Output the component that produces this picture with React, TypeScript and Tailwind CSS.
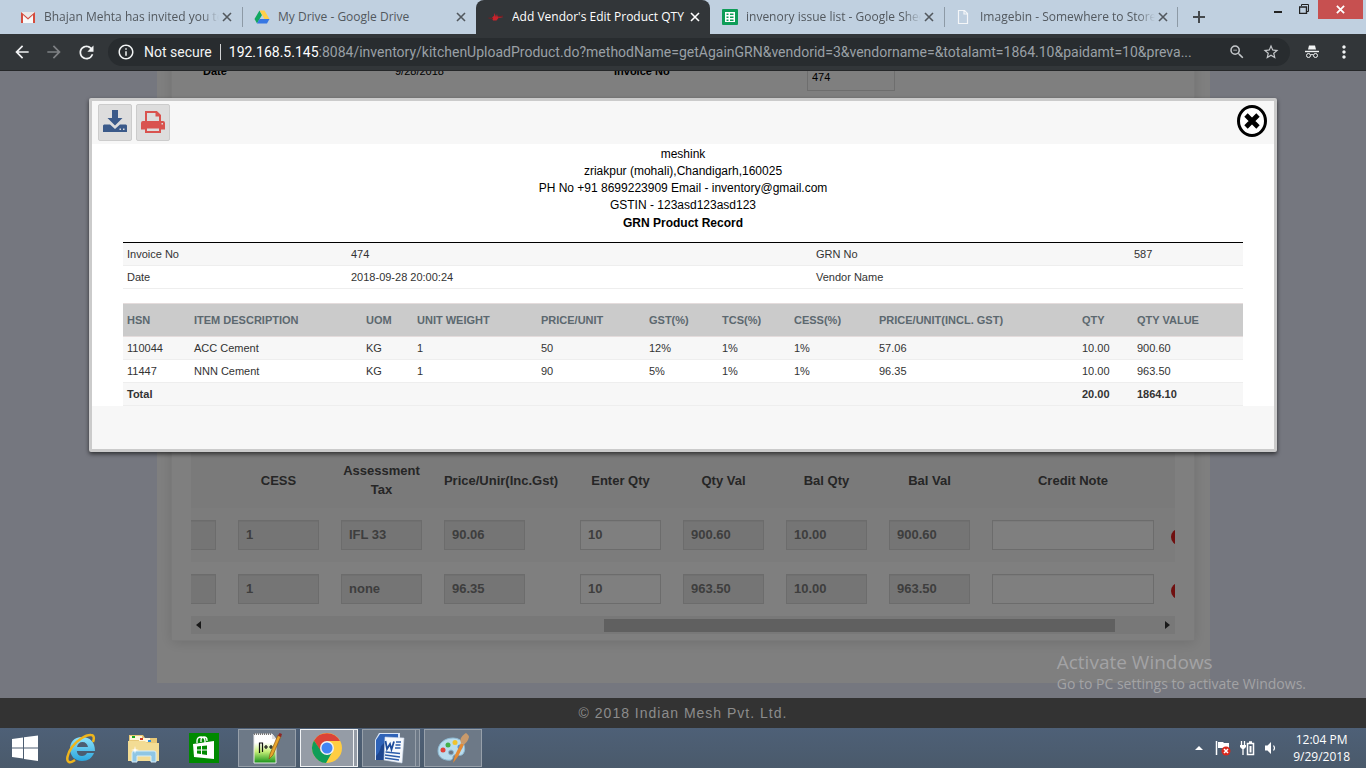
import type { ReactNode } from 'react'
import {
  MdArrowBack,
  MdArrowForward,
  MdInfoOutline,
  MdMoreVert,
  MdRefresh,
  MdStarBorder,
  MdZoomOut,
} from 'react-icons/md'

const GmailIcon = () => (
  <svg viewBox="0 0 16 16" className="size-4">
    <path d="M1 3h14v11H1z" fill="#e9e9e9" />
    <path d="M3 14V7l5 4 5-4v7z" fill="#f8f8f8" />
    <path d="M1 14V3l7 6 7-6v11h-2V6L8 10.500 3 6v8z" fill="#d54b3d" />
  </svg>
)

const DriveIcon = () => (
  <svg viewBox="0 0 16 16" className="size-4">
    <path d="M5.500 1.500 0.500 10l2.500 4.500L8 6z" fill="#11a861" />
    <path d="M5.500 1.500h5L15.500 10h-5z" fill="#ffcf48" />
    <path d="M5.500 10h10L13 14.500H3z" fill="#3777e3" />
  </svg>
)

const VendorIcon = () => (
  <svg viewBox="0 0 16 16" className="size-4">
    <path d="M5 7.500 6 7l.500-3L8 8l1-3 .500 2.500 6 .500-5 1-2 2.500H5L4 9z" fill="#c8232c" />
    <path d="M0.500 9 5 9.500M10 8l5-1" stroke="#7a1d22" />
  </svg>
)

const SheetsIcon = () => (
  <svg viewBox="0 0 16 16" className="size-4">
    <rect width="16" height="16" rx="1" fill="#0f9d58" />
    <path d="M3 3h10v10H3z" fill="#fff" />
    <path d="M4.500 4.500h2v1.500h-2zM8 4.500h3.500V6H8zM4.500 7.500h2V9h-2zM8 7.500h3.500V9H8zM4.500 10.500h2V12h-2zM8 10.500h3.500V12H8z" fill="#0f9d58" />
  </svg>
)

const PageIcon = () => (
  <svg viewBox="0 0 16 16" className="size-4">
    <path d="M2.500 1.500h6l3 3v10h-9z M8 1.500V5h3.500" fill="none" stroke="#f4f6f8" strokeWidth="1.200" />
  </svg>
)

const tabs = [
  { title: 'Bhajan Mehta has invited you to', icon: <GmailIcon />, long: true },
  { title: 'My Drive - Google Drive', icon: <DriveIcon />, divider: 'left' },
  { title: "Add Vendor's Edit Product QTY", icon: <VendorIcon />, active: true },
  { title: 'invenory issue list - Google Shee', icon: <SheetsIcon />, long: true },
  { title: 'Imagebin - Somewhere to Store', icon: <PageIcon />, divider: 'both', long: true },
]

const TabStrip = () => (
  <div className="flex h-[34px] shrink-0 bg-[#c0d0e0] pl-2 text-[12px] text-[#52585e]">
    {tabs.map((tab) => (
      <div
        key={tab.title}
        className={`flex w-[234px] min-w-0 items-center pr-[10px] pl-3 ${
          tab.active ? 'rounded-t-lg bg-[#323639] text-white' : ''
        } ${tab.divider ? 'relative' : ''}`}
      >
        {tab.divider && <span className="absolute top-[7px] left-0 h-5 w-px bg-[#8d9aa6]" />}
        {tab.divider === 'both' && <span className="absolute top-[7px] right-0 h-5 w-px bg-[#8d9aa6]" />}
        <span className="shrink-0">{tab.icon}</span>
        <span
          className={`ml-2 min-w-0 flex-1 overflow-hidden whitespace-nowrap ${tab.long ? 'mask-r-from-90%' : ''}`}
        >
          {tab.title}
        </span>
        <button type="button" aria-label={`Close ${tab.title}`} className="ml-[3px] shrink-0">
          <svg viewBox="0 0 10 10" className="size-[10px]">
            <path d="M1 1l8 8M9 1L1 9" stroke="currentColor" strokeWidth="1.600" />
          </svg>
        </button>
      </div>
    ))}
    <button type="button" aria-label="New tab" className="ml-[15px] text-[#45494d]">
      <svg viewBox="0 0 12 12" className="size-3">
        <path d="M6 0v12M0 6h12" stroke="currentColor" strokeWidth="2" />
      </svg>
    </button>
    <div className="ml-auto flex items-start text-[#222]">
      <button type="button" aria-label="Minimize" className="flex h-[20px] w-[26px] items-center justify-center">
        <svg viewBox="0 0 10 10" className="size-[10px]">
          <path d="M1 6h8v2H1z" fill="currentColor" />
        </svg>
      </button>
      <button type="button" aria-label="Restore" className="flex h-[18px] w-[26px] items-center justify-center">
        <svg viewBox="0 0 10 10" className="size-[10px]" fill="none" stroke="currentColor">
          <path d="M2.500 2V.500h7v7H8" />
          <path d="M.500 3h7v6.500h-7z" strokeWidth="1.400" />
        </svg>
      </button>
      <button
        type="button"
        aria-label="Close window"
        className="mr-[3px] ml-px flex h-[19px] w-[45px] items-center justify-center bg-[#c75050]"
      >
        <svg viewBox="0 0 10 10" className="size-[9px]">
          <path d="M1 1l8 8M9 1L1 9" stroke="#fff" strokeWidth="2" />
        </svg>
      </button>
    </div>
  </div>
)

const AddressBar = () => (
  <div className="flex h-[37px] shrink-0 items-center border-b border-[#252729] bg-[#323639] text-[#f1f3f4]">
    <button type="button" aria-label="Back" className="ml-3">
      <MdArrowBack className="size-5" />
    </button>
    <button type="button" aria-label="Forward" className="ml-3 text-[#7e8184]">
      <MdArrowForward className="size-5" />
    </button>
    <button type="button" aria-label="Reload" className="ml-3">
      <MdRefresh className="size-[21px]" />
    </button>
    <div className="ml-[11px] flex h-7 min-w-0 flex-1 items-center rounded-full bg-[#282c2f] pr-[10px] pl-[9px] font-[Roboto,sans-serif] text-[14px]">
      <MdInfoOutline className="size-[18px] shrink-0" />
      <span className="ml-[9px] shrink-0">Not secure</span>
      <span className="mx-2 h-4 w-px shrink-0 bg-[#d0d2d4]" />
      <span className="min-w-0 flex-1 overflow-hidden whitespace-nowrap text-[#9aa0a6]">
        <span className="text-white">192.168.5.145</span>
        :8084/inventory/kitchenUploadProduct.do?methodName=getAgainGRN&amp;vendorid=3&amp;vendorname=&amp;totalamt=1864.10&amp;paidamt=10&amp;preva...
      </span>
      <button type="button" aria-label="Zoom" className="ml-3 text-[#c5c8cb]">
        <MdZoomOut className="size-[18px]" />
      </button>
      <button type="button" aria-label="Bookmark" className="ml-4 text-[#c5c8cb]">
        <MdStarBorder className="size-[18px]" />
      </button>
    </div>
    <svg viewBox="0 0 16 16" className="ml-[14px] size-4" fill="none" stroke="currentColor">
      <path d="M5 1.500h6l1 4H4z" fill="currentColor" stroke="none" />
      <path d="M1 7.500h14" strokeWidth="1.400" />
      <circle cx="4.500" cy="11.500" r="2" />
      <circle cx="11.500" cy="11.500" r="2" />
      <path d="M6.500 11q1.500-1 3 0" />
    </svg>
    <button type="button" aria-label="Menu" className="mr-3 ml-[14px]">
      <MdMoreVert className="size-5" />
    </button>
  </div>
)

const stockColumns = [
  { label: '', width: 'w-[36px]' },
  { label: 'CESS', width: 'w-[103px]' },
  { label: 'Assessment Tax', width: 'w-[103px]' },
  { label: 'Price/Unir(Inc.Gst)', width: 'w-[136px]' },
  { label: 'Enter Qty', width: 'w-[103px]', editable: true },
  { label: 'Qty Val', width: 'w-[103px]' },
  { label: 'Bal Qty', width: 'w-[103px]' },
  { label: 'Bal Val', width: 'w-[103px]' },
  { label: 'Credit Note', width: 'w-[184px]', editable: true, wide: true },
]

const stockRows = [
  ['', '1', 'IFL 33', '90.06', '10', '900.60', '10.00', '900.60', ''],
  ['', '1', 'none', '96.35', '10', '963.50', '10.00', '963.50', ''],
]

const StockTable = () => (
  <table className="w-full table-fixed text-[13px] font-bold">
    <thead>
      <tr className="h-[58px] bg-[#f4f4f4] text-[#4c4c4c]">
        {stockColumns.map((col) => (
          <th key={col.label} className={`${col.width} px-[10px] pt-[2px] pb-0 text-center leading-[19px]`}>
            {col.label}
          </th>
        ))}
        <th className="w-[10px] p-0" />
      </tr>
    </thead>
    <tbody>
      {stockRows.map((row, i) => (
        <tr key={i} className="h-[54px] odd:bg-[#f8f8f8]">
          {row.map((value, j) => {
            const col = stockColumns[j]
            return (
              <td key={j} className="overflow-hidden p-0">
                <div className={j === 0 ? 'flex justify-end pr-[11px]' : 'px-[11px]'}>
                  <input
                    aria-label={col.label || 'TCS'}
                    defaultValue={value}
                    readOnly={!col.editable}
                    className={`block h-[30px] shrink-0 border border-[#d8d8d8] px-[7px] pb-px text-[#7c7c7c] inset-shadow-xs ${
                      col.wide ? 'w-full' : 'w-[81px]'
                    } ${col.editable ? 'bg-white' : 'bg-[#ebebeb]'}`}
                  />
                </div>
              </td>
            )
          })}
          <td className="overflow-hidden p-0">
            <button type="button" aria-label="Remove row" className="mt-1 ml-[6px] block size-4 rounded-full bg-[#e02020]" />
          </td>
        </tr>
      ))}
    </tbody>
  </table>
)

const StockPage = () => (
  <div className="mr-[156px] mb-[15px] ml-[157px] bg-white pr-[15px] pb-[42px] pl-[14px]">
    <div className="border border-[#f4f4f4] px-[19px] pb-[6px] shadow-[0_2px_12px_rgba(0,0,0,0.12)]">
      <div className="flex h-[396px] items-start pl-3 text-[11px] text-black">
        <span className="w-[192px] pt-[9px] font-bold">Date</span>
        <span className="w-[219px] pt-[9px]">9/28/2018</span>
        <label htmlFor="invoice" className="w-[193px] pt-[9px] font-bold">
          Invoice No
        </label>
        <input
          id="invoice"
          defaultValue="474"
          className="mt-[9px] h-[28px] w-[88px] border border-[#dcdcdc] px-1"
        />
      </div>
      <StockTable />
      <div className="flex h-[18px] items-center bg-[#f1f1f1] px-[5px] text-[#333]">
        <svg viewBox="0 0 5 8" className="h-2 w-[5px]">
          <path d="M5 0v8L0 4z" fill="currentColor" />
        </svg>
        <span className="mr-[50px] ml-[403px] h-[13px] flex-1 bg-[#c1c1c1]" />
        <svg viewBox="0 0 5 8" className="h-2 w-[5px]">
          <path d="M0 0v8l5-4z" fill="currentColor" />
        </svg>
      </div>
    </div>
  </div>
)

const productColumns = [
  { label: 'HSN', width: 'w-[67px]' },
  { label: 'ITEM DESCRIPTION', width: 'w-[172px]' },
  { label: 'UOM', width: 'w-[51px]' },
  { label: 'UNIT WEIGHT', width: 'w-[124px]' },
  { label: 'PRICE/UNIT', width: 'w-[108px]' },
  { label: 'GST(%)', width: 'w-[73px]' },
  { label: 'TCS(%)', width: 'w-[72px]' },
  { label: 'CESS(%)', width: 'w-[85px]' },
  { label: 'PRICE/UNIT(INCL. GST)', width: 'w-[203px]' },
  { label: 'QTY', width: 'w-[55px]' },
  { label: 'QTY VALUE', width: 'w-[110px]' },
]

const products = [
  ['110044', 'ACC Cement', 'KG', '1', '50', '12%', '1%', '1%', '57.06', '10.00', '900.60'],
  ['11447', 'NNN Cement', 'KG', '1', '90', '5%', '1%', '1%', '96.35', '10.00', '963.50'],
]

const GrnDialog = () => (
  <div
    role="dialog"
    aria-label="GRN Product Record"
    className="w-full rounded-xs border-3 border-[#cbcbcb] bg-[#f7f7f7] pb-[43px] shadow-[0_2px_4px_rgba(0,0,0,0.6)]"
  >
    <div className="flex h-[43px] items-start gap-1 px-[6px] pt-[3px]">
      <button
        type="button"
        aria-label="Download"
        className="flex h-[37px] w-[34px] items-center justify-center rounded-xs border border-[#ccc] bg-[#ddd]"
      >
        <svg viewBox="0 0 24 24" className="mb-[3px] size-6">
          <path d="M9 1h6v8h4.500L12 16.500 4.500 9H9z" fill="#3b5a8a" />
          <path d="M1 15.500h6l5 4.500 5-4.500h6l1 1V23H0v-6.500z" fill="#3b5a8a" />
          <path d="M16.500 19.500H18V21h-1.500zM20 19.500h1.500V21H20z" fill="#ddd" />
        </svg>
      </button>
      <button
        type="button"
        aria-label="Print"
        className="flex h-[37px] w-[34px] items-center justify-center rounded-xs border border-[#ccc] bg-[#ddd]"
      >
        <svg viewBox="0 0 24 24" className="mb-px size-6">
          <path d="M5 12V2h10.500L19 5.500V12" fill="#ddd" stroke="#d9534f" strokeWidth="2" />
          <path d="M14.500 1.500V6.500H20z" fill="#d9534f" />
          <path d="M2 11h20q2 0 2 2v6.500h-4V17H4v2.500H0V13q0-2 2-2z" fill="#d9534f" />
          <path d="M5 17.500h14V22H5z" fill="#ddd" stroke="#d9534f" strokeWidth="2" />
          <path d="M20.500 13H22v1.500h-1.500z" fill="#ddd" />
        </svg>
      </button>
      <button type="button" aria-label="Close" className="ml-auto">
        <svg viewBox="0 0 32 34" className="h-[34px] w-8" fill="none" stroke="#000">
          <ellipse cx="16" cy="17" rx="13.500" ry="14.500" strokeWidth="3" fill="#fff" />
          <path d="M10 11l12 12M22 11L10 23" strokeWidth="4.800" />
        </svg>
      </button>
    </div>

    <div className="bg-white px-[31px]">
      <div className="pt-[2px] text-center text-[12px] leading-[17px] text-black">
        <p>meshink</p>
        <p>zriakpur (mohali),Chandigarh,160025</p>
        <p>PH No +91 8699223909 Email - inventory@gmail.com</p>
        <p>GSTIN - 123asd123asd123</p>
        <h2 className="pb-[10px] leading-[18px] font-bold">GRN Product Record</h2>
      </div>
      <table className="w-full table-fixed border-t border-black text-left text-[11px] text-[#333]">
        <tbody>
          <tr className="h-[23px] border-b border-[#eee] bg-[#f7f7f7]">
            <td className="w-[224px] px-1 py-0">Invoice No</td>
            <td className="w-[465px] px-1 py-0">474</td>
            <td className="w-[318px] px-1 py-0">GRN No</td>
            <td className="w-[113px] px-1 py-0">587</td>
          </tr>
          <tr className="h-[23px] border-b border-[#eee]">
            <td className="px-1 py-0">Date</td>
            <td className="px-1 py-0">2018-09-28 20:00:24</td>
            <td className="px-1 py-0">Vendor Name</td>
            <td />
          </tr>
        </tbody>
      </table>
      <table className="mt-[14px] w-full table-fixed text-left text-[11px] text-[#333]">
        <thead>
          <tr className="h-[33px] border-y border-[#e4dcdc] bg-[#cbcbcb] text-[#5c686f]">
            {productColumns.map((col) => (
              <th key={col.label} className={`${col.width} px-1 py-0 whitespace-nowrap`}>
                {col.label}
              </th>
            ))}
          </tr>
        </thead>
        <tbody>
          {products.map((row) => (
            <tr key={row[0]} className="h-[23px] border-b border-[#eee] odd:bg-[#f7f7f7]">
              {row.map((value, i) => (
                <td key={i} className="px-1 py-0">
                  {value}
                </td>
              ))}
            </tr>
          ))}
          <tr className="h-[23px] border-b border-[#eee] bg-[#f7f7f7] font-bold">
            <td colSpan={9} className="px-1 py-0">
              Total
            </td>
            <td className="px-1 py-0">20.00</td>
            <td className="px-1 py-0">1864.10</td>
          </tr>
        </tbody>
      </table>
    </div>
  </div>
)

const StartIcon = () => (
  <svg viewBox="0 0 26 26" className="size-[26px]" fill="#fff">
    <path d="M0 4l11-1.500V12.500H0zM12 2.300 26 .500v12H12zM0 13.500h11v10L0 22zM12 13.500h14V26l-14-2z" />
  </svg>
)

const FilesIcon = () => (
  <svg viewBox="0 0 32 32" className="size-8">
    <path d="M2 3h14l2 3h12v22H2z" fill="#e8c877" />
    <path d="M3 4h12v4H3zM12 6h11v4H12z" fill="#fff7dd" />
    <path d="M5 4h3v2H5z" fill="#1ba81b" />
    <path d="M13 6h3v2h-3z" fill="#d03a20" />
    <path d="M21 8h3v2h-3z" fill="#2a8fe0" />
    <path d="M1 9h17l2 2h12v18H1z" fill="#f3dc94" />
    <path d="M5 30V21q0-2 2-2h20q2 0 2 2v9h-5v-6H10v6z" fill="#8fc6e4" stroke="#d6eef8" />
    <path d="M8 14l.700 3.300L12 18l-3.300.700L8 22l-.700-3.300L4 18l3.300-.700z" fill="#fff" />
  </svg>
)

const BrowserIcon = () => (
  <svg viewBox="0 0 32 32" className="size-8">
    <defs>
      <linearGradient id="ie" x2="0" y2="1">
        <stop stopColor="#8fe3fb" />
        <stop offset="1" stopColor="#2aa6de" />
      </linearGradient>
    </defs>
    <path
      d="M17 5C9 5 5 10 5 17s5 12 12 12c6 0 10-3 12-8h-7c-1 2-2.500 3-5 3-3 0-5-2-5.200-5H30C30 10 25 5 17 5zm-5 10c.500-3 2.500-5 5.500-5s5 2 5.500 5z"
      fill="url(#ie)"
    />
    <path
      d="M28 10c1.500-4 1-7-2-7C21 2.500 12 8 7 15 2 22 1 29 4 30c1.500.500 4-.500 6-2"
      fill="none"
      stroke="#efb51c"
      strokeWidth="2.500"
    />
  </svg>
)

const StoreIcon = () => (
  <svg viewBox="0 0 30 30" className="size-[30px]">
    <path d="M0 0h30v30H0z" fill="#008a00" />
    <path d="M8 10V8q0-4 4-4t4 4v2M12 9V7q0-3 3-3t3 3v1" fill="none" stroke="#fff" strokeWidth="1.300" />
    <path d="M4 11l21-3v18L5 24z" fill="#fff" />
    <path d="M8 13.500l4-.500v3.500H8zM13 13l5-.600v4.100h-5zM8 17.500h4V21l-4-.500zM13 17.500h5v4.500l-5-.800z" fill="#008a00" />
  </svg>
)

const NotepadIcon = () => (
  <svg viewBox="0 0 32 32" className="size-8">
    <defs>
      <linearGradient id="npp" x2="0" y2="1">
        <stop offset="0.300" stopColor="#fff" />
        <stop offset="0.600" stopColor="#c8f07a" />
        <stop offset="1" stopColor="#159018" />
      </linearGradient>
    </defs>
    <path d="M3 2h18l4 5v24H3z" fill="url(#npp)" stroke="#e8e8e8" />
    <path d="M3 2h18" stroke="#777" strokeWidth="2" strokeDasharray="1 1" />
    <path d="M21 2v5h4z" fill="#ddd" />
    <path d="M8.500 21V11h3v9M13 15h4M15 13v4M18 15h4M20 13v4" fill="none" stroke="#111" strokeWidth="1.200" />
    <path d="M18 27l1-5L27 3l3 1-8 19z" fill="#e9a52c" stroke="#8b5712" strokeWidth="0.700" />
    <path d="M27 4l1.500-3L31 2l-1 3z" fill="#8d2626" />
  </svg>
)

const ChromeIcon = () => (
  <svg viewBox="0 0 32 32" className="size-8">
    <circle cx="16" cy="16" r="15" fill="#ffcd42" />
    <path d="M3 8.500A15 15 0 0 1 29 9H16l-6.500 10z" fill="#db4437" />
    <path d="M3 8.500A15 15 0 0 0 15 31l6.500-11.500L16 23l-6-4z" fill="#0f9d58" />
    <circle cx="16" cy="16" r="7" fill="#f1f1f1" />
    <circle cx="16" cy="16" r="5.500" fill="#4285f4" />
  </svg>
)

const WordIcon = () => (
  <svg viewBox="0 0 32 32" className="size-8">
    <path d="M6 1h21v5L14 28H2V8z" fill="#d8e5f7" />
    <path d="M7 2h18v5H12v19H3V8z" fill="#2f63b8" />
    <path d="M3 24q4-4 5-10l4-4v18H3z" fill="#1e468f" />
    <path d="M12 5l19 1-2 25-18-3z" fill="#f6f9fd" stroke="#c7d5e8" strokeWidth="0.600" />
    <path d="M12.500 9l1.500 8 3-5 1.500 5.500L21 9.500" fill="none" stroke="#1d4c9c" strokeWidth="1.800" />
    <path d="M23 10h5M22.500 13h5M22 16h5.500M12.500 20l14.500 1.500M12 23l15 2M12 26l14 2" stroke="#2b5caa" strokeWidth="1.400" />
  </svg>
)

const PaintIcon = () => (
  <svg viewBox="0 0 32 32" className="size-8">
    <path
      d="M16 6C7 6 1 12 1 19c0 7 7 10 13 9 3-1 1-4 3-5 3-1 6 2 9-1 4-5 1-16-10-16zm-2 12a2.500 2.500 0 1 1 0 5 2.500 2.500 0 0 1 0-5z"
      fill="#b9dcee"
      stroke="#8db9d2"
      fillRule="evenodd"
    />
    <circle cx="6" cy="18" r="2.500" fill="#e0433a" />
    <circle cx="11" cy="13" r="2.500" fill="#43b04a" />
    <circle cx="18" cy="10.500" r="2.500" fill="#f0c32f" />
    <circle cx="23" cy="15" r="2.500" fill="#4e8fdf" />
    <path d="M16 31l2-8 6-12 3 1.500-6 12z" fill="#e48a34" />
    <path d="M24 11c-2-5 2-8 5-10 1 1 3 2 3 4-1 4-3 6-5 7.500z" fill="#c99a6b" />
  </svg>
)

const TaskButton = ({ label, active, stacked, children }: { label: string; active?: boolean; stacked?: boolean; children: ReactNode }) => (
  <button type="button" aria-label={label} className="flex h-[38px] w-[58px]">
    <span
      className={`flex h-full flex-1 items-center justify-center border ${
        active ? 'border-[#f0f2f4] bg-[#959ca6]' : 'border-[#97a0aa] bg-[#6d7987]'
      }`}
    >
      {children}
    </span>
    {stacked && (
      <span
        className={`h-full w-1 border border-l-0 ${
          active ? 'border-[#f0f2f4] bg-[#959ca6]' : 'border-[#97a0aa] bg-[#6d7987]'
        }`}
      />
    )}
  </button>
)

const Taskbar = () => (
  <div className="flex h-10 shrink-0 items-center bg-linear-to-b from-[#4e6077] to-[#4a5a6b] text-white">
    <button type="button" aria-label="Start" className="ml-3">
      <StartIcon />
    </button>
    <div className="ml-[27px] flex items-center gap-[30px]">
      <button type="button" aria-label="Internet Explorer"><BrowserIcon /></button>
      <button type="button" aria-label="File Explorer"><FilesIcon /></button>
      <button type="button" aria-label="Store"><StoreIcon /></button>
    </div>
    <div className="ml-[19px] flex gap-1">
      <TaskButton label="Notepad++"><NotepadIcon /></TaskButton>
      <TaskButton label="Chrome" active stacked><ChromeIcon /></TaskButton>
      <TaskButton label="Word" stacked><WordIcon /></TaskButton>
      <TaskButton label="Paint"><PaintIcon /></TaskButton>
    </div>
    <div className="ml-auto flex items-center">
      <svg viewBox="0 0 8 4" className="h-1 w-2">
        <path d="M0 4l4-4 4 4z" fill="#fff" />
      </svg>
      <svg viewBox="0 0 16 16" className="ml-3 size-4">
        <path d="M1.500 1v14" stroke="#fff" strokeWidth="1.500" />
        <path d="M3 2h5l1 1h5v6H9L8 8H3z" fill="#fff" />
        <circle cx="11" cy="11" r="4.500" fill="#d9281c" />
        <path d="M9 9l4 4M13 9l-4 4" stroke="#fff" strokeWidth="1.500" />
      </svg>
      <svg viewBox="0 0 16 16" className="ml-2 size-4" fill="none" stroke="#fff">
        <path d="M2.500 1v4M5.500 1v4M4 8v7" strokeWidth="1.300" />
        <path d="M1 5h6v2L5 9H3L1 7z" fill="#fff" stroke="none" />
        <path d="M8.500 3.500h6v11h-6zM10 2h3" strokeWidth="1.500" />
        <path d="M10.500 6h2v6.500h-2z" fill="#fff" stroke="none" />
      </svg>
      <svg viewBox="0 0 16 16" className="ml-2 size-4" fill="none" stroke="#fff">
        <path d="M2 5.500h2.500L8 2v12l-3.500-3.500H2z" fill="#fff" stroke="none" />
        <path d="M10.500 5.500q2 2.500 0 5" strokeWidth="1.200" />
      </svg>
      <div className="mr-4 ml-[14px] text-center text-[12px] leading-[17px]">
        <p>12:04 PM</p>
        <p>9/29/2018</p>
      </div>
    </div>
  </div>
)

const App = () => (
  <div className="flex h-screen flex-col overflow-hidden font-['Open_Sans',sans-serif]">
    <TabStrip />
    <AddressBar />
    <main className="relative flex min-h-0 flex-1 flex-col justify-end overflow-hidden bg-[#eaeffe] font-['Liberation_Sans',Arial,sans-serif]">
      <StockPage />
      <div className="absolute inset-0 flex items-start bg-black/50 px-[89px] pt-[27px]">
        <GrnDialog />
      </div>
      <div className="absolute right-[60px] bottom-1 font-['Open_Sans',sans-serif] text-[#a3a3a5]">
        <p className="text-[19px] leading-6">Activate Windows</p>
        <p className="text-[14px] leading-5">Go to PC settings to activate Windows.</p>
      </div>
    </main>
    <footer className="h-[30px] shrink-0 bg-[#333] text-center font-['Liberation_Sans',Arial,sans-serif] text-[14px] leading-[30px] tracking-[1px] text-[#8c8c8c]">
      © 2018 Indian Mesh Pvt. Ltd.
    </footer>
    <Taskbar />
  </div>
)

export default App
